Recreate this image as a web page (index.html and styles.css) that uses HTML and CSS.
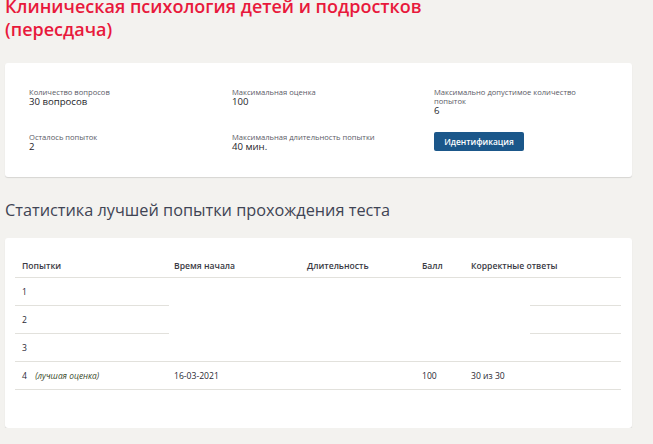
FILE: index.html
```html
<!DOCTYPE html>
<html lang="ru">
<head>
<meta charset="utf-8">
<link rel="stylesheet" href="styles.css">
</head>
<body>
<div class="page">
  <h1 class="title">Клиническая психология детей и подростков (пересдача)</h1>

  <div class="card info">
    <div class="item">
      <div class="label">Количество вопросов</div>
      <div class="value">30 вопросов</div>
    </div>
    <div class="item">
      <div class="label">Максимальная оценка</div>
      <div class="value">100</div>
    </div>
    <div class="item">
      <div class="label narrow">Максимально допустимое количество попыток</div>
      <div class="value">6</div>
    </div>
    <div class="item row2">
      <div class="label">Осталось попыток</div>
      <div class="value">2</div>
    </div>
    <div class="item row2">
      <div class="label">Максимальная длительность попытки</div>
      <div class="value">40 мин.</div>
    </div>
    <div class="item row2">
      <button class="btn">Идентификация</button>
    </div>
  </div>

  <h2 class="subtitle">Статистика лучшей попытки прохождения теста</h2>

  <div class="card stats">
    <table class="tbl">
      <colgroup>
        <col class="c1"><col class="c2"><col class="c3"><col class="c4"><col class="c5"><col class="c6">
      </colgroup>
      <thead>
        <tr>
          <th class="first">Попытки</th>
          <th>Время начала</th>
          <th>Длительность</th>
          <th>Балл</th>
          <th colspan="2">Корректные ответы</th>
        </tr>
      </thead>
      <tbody>
        <tr>
          <td class="first line">1</td>
          <td class="merged" rowspan="3" colspan="4"></td>
          <td class="line"></td>
        </tr>
        <tr>
          <td class="first line">2</td>
          <td class="line"></td>
        </tr>
        <tr>
          <td class="first line">3</td>
          <td class="line"></td>
        </tr>
        <tr>
          <td class="first line">4 <span class="best">(лучшая оценка)</span></td>
          <td class="line">16-03-2021</td>
          <td class="line"></td>
          <td class="line">100</td>
          <td class="line">30 из 30</td>
          <td class="line"></td>
        </tr>
      </tbody>
    </table>
  </div>
</div>
</body>
</html>
```

FILE: styles.css
```css
html, body {
  margin: 0;
  padding: 0;
  background: #f3f2ef;
  font-family: "Open Sans", "Liberation Sans", sans-serif;
}

.page {
  padding: 0 21px 0 5px;
  width: 627px;
}

.title {
  margin: -5px 0 0 0;
  max-width: 500px;
  font-size: 18px;
  line-height: 23px;
  font-weight: 600;
  color: #e8193c;
}

.card {
  background: #fff;
  border-radius: 3px;
  box-shadow: 0 1px 1px rgba(0, 0, 0, 0.12);
}

.info {
  margin-top: 22px;
  height: 114px;
  box-sizing: border-box;
  padding: 25px 10px 0 24px;
  display: grid;
  grid-template-columns: 203px 202px 1fr;
  grid-template-rows: 31px auto;
  row-gap: 13px;
}

.label {
  font-size: 7.6px;
  line-height: 9px;
  color: #5a5a66;
}

.label.narrow {
  max-width: 160px;
}

.value {
  font-size: 9.6px;
  line-height: 10px;
  color: #1e1e2a;
}

.row2 .label {
  margin-top: 1px;
}

.btn {
  display: block;
  width: 90px;
  height: 19px;
  padding: 0;
  border: none;
  border-radius: 2px;
  background: #1b578a;
  color: #fff;
  font-family: "Open Sans", "Liberation Sans", sans-serif;
  font-size: 8.4px;
  font-weight: 600;
}

.subtitle {
  margin: 21px 0 0 0;
  font-size: 16.3px;
  line-height: 24px;
  font-weight: 400;
  color: #3f4454;
}

.stats {
  margin-top: 16px;
  height: 190px;
  box-sizing: border-box;
  padding: 16px 11px 0 10px;
}

.tbl {
  width: 606px;
  border-collapse: collapse;
  table-layout: fixed;
  font-size: 8.6px;
  color: #2a2a33;
}

.c1 { width: 154px; }
.c2 { width: 133px; }
.c3 { width: 115px; }
.c4 { width: 49px; }
.c5 { width: 64px; }
.c6 { width: 91px; }

.tbl th {
  height: 23px;
  text-align: left;
  font-weight: 600;
  padding: 0 0 0 5px;
  border-bottom: 1px solid #e2e1dc;
  white-space: nowrap;
  color: #3a3a44;
}

.tbl td {
  height: 27px;
  padding: 0 0 0 5px;
  white-space: nowrap;
}

.tbl th.first, .tbl td.first {
  padding-left: 7px;
}

.tbl td.line {
  border-bottom: 1px solid #e2e1dc;
}

.tbl td.merged {
  border-bottom: 1px solid #e2e1dc;
}

.best {
  margin-left: 6px;
  font-style: italic;
  font-size: 8.4px;
  color: #3a4a2c;
}
```
